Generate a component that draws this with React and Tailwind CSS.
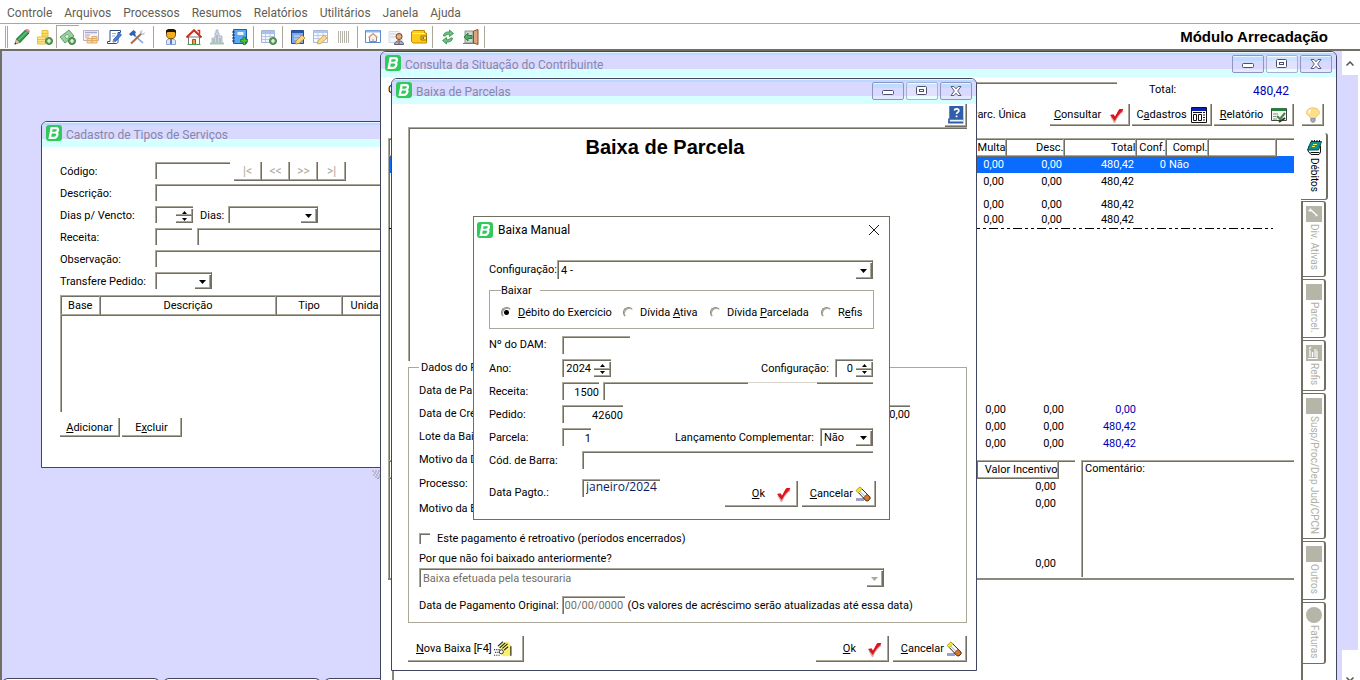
import { useState } from "react";

const SUNKEN = "border-t border-l border-[#aca899] shadow-[inset_1px_1px_0_#716f64] bg-white";
const RAISED = "border-r border-b border-[#716f64] shadow-[inset_-1px_-1px_0_#aca899] bg-white";

const MENUS = ["Controle", "Arquivos", "Processos", "Resumos", "Relatórios", "Utilitários", "Janela", "Ajuda"];

/* ---------- icons ---------- */

function Icon({ children, className = "w-4 h-4" }) {
  return (
    <svg viewBox="0 0 16 16" className={`${className} shrink-0`} fill="none" aria-hidden="true">
      {children}
    </svg>
  );
}

function Logo() {
  return (
    <svg viewBox="0 0 16 16" className="w-4 h-4 shrink-0" aria-hidden="true">
      <rect width="16" height="16" rx="3" fill="#2fc95c" />
      <path d="M5.6 3.2h4.400c2.600 0 2.600 3.400 .2 4.300 2.300 .9 1 5.300-2 5.300H3.800z" fill="none" stroke="#fff" strokeWidth="2.300" />
      <path d="M5 7.700h5" stroke="#fff" strokeWidth="1.800" />
    </svg>
  );
}

const Plus = () => (
  <>
    <circle cx="12" cy="12" r="3.500" fill="#5fa35a" stroke="#3f7f43" />
    <path d="M12 10v4M10 12h4" stroke="#fff" strokeWidth="1.200" />
  </>
);

const PencilIcon = () => (
  <Icon>
    <path d="M2.500 10L11.500 1l3.500 3-9 9.500z" fill="#2f9e4f" stroke="#1c6b35" />
    <path d="M4.500 11L13 2.800" stroke="#63c47a" strokeWidth="1.300" />
    <path d="M2.500 10l3.500 3.500L.8 15.200z" fill="#e9c99a" stroke="#555" strokeWidth=".6" />
    <path d="M.5 15.500l2-.8-1.200-1.200z" fill="#222" />
    <path d="M11.500 1L15 4l.8-1c.3-1.800-1.500-3.200-3.100-2.900z" fill="#e58b8b" />
  </Icon>
);
const CoinsIcon = () => (
  <Icon>
    <path d="M5 1.500h6V12H5z" fill="#ffe065" stroke="#e6bd4a" />
    <path d="M.5 8h8v7h-8z" fill="#ffe88a" stroke="#e6bd4a" />
    <path d="M1 10.500h7M1 12.800h7M5 4.500h6M5 7h6" stroke="#e6bd4a" />
    <Plus />
  </Icon>
);
const MoneyIcon = () => (
  <Icon>
    <path d="M0 8L9 1l5 6-9 7z" fill="#9ccf9f" stroke="#5d9e66" />
    <circle cx="7" cy="7.500" r="2" fill="#d9f0d9" stroke="#5d9e66" strokeWidth=".7" />
    <Plus />
  </Icon>
);
const StatementIcon = () => (
  <Icon>
    <path d="M.5 1.500h15v10H.5z" fill="#f3f4fb" stroke="#b3b3c4" />
    <path d="M2 3.500h12" stroke="#a6a9cc" strokeWidth="1.500" />
    <path d="M2 6h5M2 8h4" stroke="#c2a0a0" />
    <path d="M4 9.500h5V14H4zM9 7.500h5V14H9z" fill="#ffd9a0" stroke="#e2ab69" />
    <path d="M4 11.500h10M9 9.500h5" stroke="#e2ab69" />
  </Icon>
);
const ScrollPenIcon = () => (
  <Icon>
    <path d="M4 1.500h10.500v2H12v9c0 1.500-1 2-2 2H1.500v-2H4z" fill="#fff" stroke="#334a86" />
    <path d="M6 4.500h4M6 7h3" stroke="#9fb1df" />
    <path d="M7.500 10.500L13.500 4l2 2-6 6.500-2.500.6z" fill="#3d7fe0" stroke="#1f4da0" strokeWidth=".7" />
    <path d="M6.800 13.200l.6-2.500 1.900 1.800z" fill="#e07a50" />
  </Icon>
);
const ToolsIcon = () => (
  <Icon>
    <path d="M5 6l9 8" stroke="#7f9fd0" strokeWidth="1.500" />
    <path d="M0 5l4.500-4L7 3 6 5l1 1-1.500 1.500L4 6 2 7z" fill="#2f62b4" />
    <path d="M12.500 4.500L2 14.500" stroke="#b06a48" strokeWidth="2" />
    <path d="M10.500 3c1-1.500 3-2 3.500-2l-1.500 2L14 4.500l2-1.300c0 2-1.500 3-3.500 2.500z" fill="#b9c6dc" />
  </Icon>
);
const PersonIcon = () => (
  <Icon>
    <path d="M3.500 15.500v-3.500c0-3 9-3 9 0v3.500z" fill="#dce8fa" stroke="#8aa3cf" />
    <path d="M8 10v5" stroke="#2b5bb0" strokeWidth="1.500" />
    <path d="M3.500 1.500h9v5.500l-2 2.500h-5l-2-2.500z" fill="#f5ac1c" stroke="#6d4300" strokeWidth=".8" />
    <path d="M3 5V1.500L5 0h6l2 1.500V5l-1.500-2h-7z" fill="#20170c" />
  </Icon>
);
const HouseIcon = () => (
  <Icon>
    <path d="M2.500 8h11v7.500h-11z" fill="#fff" stroke="#777" />
    <path d="M.5 8.500L8 1.200l7.500 7.300" stroke="#c9301c" strokeWidth="2" />
    <path d="M11.500 1.500h2v4" stroke="#c9301c" strokeWidth="1.500" />
    <path d="M6.500 10.500h3v5h-3z" fill="#e79a4c" stroke="#9a5a20" />
    <path d="M1.500 15.500h13" stroke="#4f9a4d" />
  </Icon>
);
const MonumentIcon = () => (
  <Icon>
    <path d="M7 1h2v3h1v3h3v7H3v-5h3V4h1z" fill="#d3d9e2" stroke="#a3acbb" strokeWidth=".8" />
    <path d="M5 10v3M8 6v7M11 9v4" stroke="#8d9ab0" />
    <path d="M1 14.500h14" stroke="#a5c9ae" strokeWidth="2" />
  </Icon>
);
const BookPlusIcon = () => (
  <Icon>
    <path d="M1.500.5h13v14h-13z" fill="#5aaaf4" stroke="#1b5eab" />
    <path d="M5.500 3h6v3h-6z" fill="#e6f3ff" />
    <path d="M0 3h3M0 6h3M0 9h3M0 12h3" stroke="#1b3f73" />
    <path d="M11 8h2.500v2.500H16V13h-2.500v2.500H11V13H8.500v-2.500H11z" fill="#48c52e" stroke="#1f7a14" strokeWidth=".8" />
  </Icon>
);
const TablePlusIcon = () => (
  <Icon>
    <path d="M.5 1.500h13v12H.5z" fill="#f2f6ff" stroke="#a3b4d2" />
    <path d="M1 3.500h12.500" stroke="#a9c0ea" strokeWidth="3" />
    <path d="M1 7.500h12M1 10.500h12M4.500 5v8M9 5v8" stroke="#b9c8e0" />
    <Plus />
  </Icon>
);
const BlueEditIcon = () => (
  <Icon>
    <path d="M1.500 1.500h12v13h-12z" fill="#7ba8ea" stroke="#234b94" />
    <path d="M2 3h11" stroke="#2a57a8" strokeWidth="2" />
    <path d="M4 7h6M4 10h4" stroke="#d3e3fb" />
    <path d="M6 12l6-6 3 3-6 5.500-3.500.5z" fill="#f9d283" stroke="#b87f2c" strokeWidth=".8" />
  </Icon>
);
const TableEditIcon = () => (
  <Icon>
    <path d="M.5 1.500h14v12H.5z" fill="#f4f8ff" stroke="#a3b8dc" />
    <path d="M1 3h13" stroke="#b3caf0" strokeWidth="2" />
    <path d="M1 6.500h13M1 9.500h13M5 4v9M10 4v9" stroke="#bccbe4" />
    <path d="M5 12l6-6 3 3-6 5.500-3.500.5z" fill="#fbd88c" stroke="#cf9b46" strokeWidth=".8" />
  </Icon>
);
const BarcodeIcon = () => (
  <Icon>
    <path d="M2.500 2v12M4.500 2v12M6.500 2v12M8.500 2v12M10.500 2v12M12.500 2v12" stroke="#b5b5ac" />
  </Icon>
);
const WindowHomeIcon = () => (
  <Icon>
    <path d="M.5 1.500h15v12H.5z" fill="#fff" stroke="#5d8bcb" />
    <path d="M1 2.500h14" stroke="#8fbaf0" strokeWidth="2" />
    <path d="M4.500 8v4.500h7V8" fill="#f0f0f0" stroke="#888" />
    <path d="M3.500 8.500L8 4.800l4.500 3.700" stroke="#dd9d76" strokeWidth="1.500" />
    <path d="M7.500 10h1v3h-1z" fill="#999" />
  </Icon>
);
const UserDocIcon = () => (
  <Icon>
    <path d="M1 2.500h10l3 3v8H1z" fill="#f3f5fa" stroke="#d3d9e4" />
    <path d="M2 5h6M2 8h5" stroke="#c9cfdd" />
    <circle cx="11" cy="7.500" r="3" fill="#e9ad78" stroke="#75441e" />
    <path d="M6.500 15.500c0-5 9-5 9 0z" fill="#a8aebb" stroke="#5c6475" />
    <path d="M11 12v3.500" stroke="#d13b2a" />
  </Icon>
);
const WalletIcon = () => (
  <Icon>
    <path d="M.5 3l2-1.500h11V4h2v10H2L.5 12.500z" fill="#ffcc1a" stroke="#b98a00" />
    <path d="M2 4.500h12" stroke="#fff0a0" />
    <path d="M10 7h5.500v4H10z" fill="#ffe069" stroke="#8f6b00" />
    <circle cx="12.200" cy="9" r=".9" fill="#7a5c00" />
  </Icon>
);
const RefreshIcon = () => (
  <Icon>
    <path d="M3.500 7c0-3 3-4.500 6-4V1l4 3.500-4 3V5.500C7.500 5 6 5.500 5.500 7z" fill="#6cc07a" stroke="#2f8b46" strokeWidth=".8" />
    <path d="M12.500 9c0 3-3 4.500-6 4v2l-4-3.500 4-3v2c2 .5 3.500 0 4-1.500z" fill="#6cc07a" stroke="#2f8b46" strokeWidth=".8" />
  </Icon>
);
const ExitIcon = () => (
  <Icon>
    <path d="M2 2h8v12H2z" fill="#cfd6cc" stroke="#8b9487" />
    <path d="M10.500 2L15 .5v15l-4.500-1.500z" fill="#dca680" stroke="#8a5128" />
    <path d="M1 8l4-4v2.500h4v3H5V12z" fill="#4fb062" stroke="#20703a" strokeWidth=".8" />
    <path d="M0 14.500h11" stroke="#777" />
  </Icon>
);
const CheckIcon = () => (
  <Icon>
    <path d="M2.500 9.500l3 5.500c2-5 4-8 8.500-11" stroke="#d9a9a9" strokeWidth="2" />
    <path d="M1 8l3.500-.8L6 9.500C8 6 9.500 3 10.500 2h3.800L13.500 4C10.500 6.500 8 9.500 5.800 14z" fill="#e0131a" />
  </Icon>
);
const EraserIcon = () => (
  <Icon>
    <path d="M1 13.500h8" stroke="#9da0c8" strokeWidth="3" />
    <path d="M1.500 4.500L5 1 14.800 11c.8 2.500-1.500 4.500-4 3.500z" fill="#fff" stroke="#222" />
    <path d="M.8 4.500L5 .8l2 2L3.300 6.800z" fill="#f4e42a" stroke="#b0a600" strokeWidth=".6" />
    <path d="M8.500 11.800l3.500-3.500 2.800 2.700c.8 2.500-1.500 4.500-4 3.500z" fill="#d9762a" stroke="#5a2a00" strokeWidth=".8" />
    <path d="M4.500 5l5.500 5.500" stroke="#888" strokeWidth=".8" />
  </Icon>
);
const HandIcon = () => (
  <Icon className="w-[18px] h-[18px]">
    <path d="M4 6l3-4 2 .5L11 1l2 1 1 1.500 1.500 2v9H8l-3-2.500 1.500-3.500z" fill="#f7ee72" />
    <path d="M3.500 5.500L8 1.500M5 7l5-4.500M7.500 7.500l4.500-4M9 9l3.500-3M15 5.500v8.500" stroke="#222" />
    <path d="M0 8.500h5M1 11h4M0 13.500h6" stroke="#333" strokeDasharray="1 1" />
    <circle cx="6.500" cy="10.500" r="1.800" fill="#fff" stroke="#222" strokeWidth=".8" />
  </Icon>
);
const FormsIcon = () => (
  <Icon>
    <path d="M.5 .5h15v15H.5z" fill="#fff" stroke="#111" />
    <path d="M1 2.500h14" stroke="#0a1fb4" strokeWidth="3" />
    <path d="M2.500 7.500h3v6h-3zM7.500 7.500h3v6h-3z" stroke="#111" />
    <path d="M2 5.500h9M12 5.500h2M12 8h2M12 10.500h2M12 13h2" stroke="#111" />
  </Icon>
);
const ReportIcon = () => (
  <Icon>
    <path d="M.5 1.500h15v12H.5z" fill="#f4f8f0" stroke="#444" />
    <path d="M1 2.500h14" stroke="#2b7d42" strokeWidth="3" />
    <path d="M2 7h5M2 9.500h3M2 12h4" stroke="#888" />
    <path d="M6 9l3 3 5-6" stroke="#3f8a3a" strokeWidth="2" />
    <path d="M8 15l6-4" stroke="#333" strokeWidth="2" />
  </Icon>
);
const BulbIcon = () => (
  <Icon>
    <path d="M8 .8c-4.500 0-7 3-6.300 5.800C2.200 8.500 5.500 9.300 5.500 11h5c0-1.700 3.300-2.500 3.800-4.400C15 3.800 12.500 .8 8 .8z" fill="#ffdf8a" stroke="#eeb75a" strokeWidth=".8" />
    <path d="M5.500 3c-1 .6-1.500 2-1 3.200" stroke="#fff" strokeWidth="1.500" />
    <path d="M5.800 11.500h4.400v2.300l-1 1.400H6.800l-1-1.400z" fill="#a8adb8" stroke="#6b707c" strokeWidth=".6" />
  </Icon>
);
const HelpBookIcon = () => (
  <Icon className="w-[18px] h-[18px]">
    <path d="M2 0h12.500v12H2z" fill="#2e5fa8" />
    <path d="M1 11h13.500v4.500H1z" fill="#2e5fa8" />
    <path d="M2.500 13h12" stroke="#eef3fb" strokeWidth="1.500" />
    <path d="M6.500 4c.3-2 4-2 4 .2 0 1.500-2 1.300-2 3M8.500 8.500V10" stroke="#fff" strokeWidth="1.500" />
  </Icon>
);
const NotebookIcon = () => (
  <Icon>
    <path d="M3 7h11.500v6.500L13 15.500H5L2 12z" fill="#fff" stroke="#111" />
    <path d="M5 2.500h10.500l-3 8.500H1.500z" fill="#12908e" stroke="#064f4e" />
    <path d="M6 1v2M8.500 1v2M11 1v2M13.500 1v2" stroke="#111" />
    <path d="M7 5.500h4M6 7.500h3" stroke="#eaf06a" />
    <path d="M4.500 13.500h9" stroke="#111" />
  </Icon>
);
const GrayIcon = ({ kind }) => (
  <Icon>
    {kind === "circle" ? <circle cx="8" cy="8" r="8" fill="#b5b5a8" /> : <rect width="16" height="16" fill="#b5b5a8" />}
    {kind === "tool" && <path d="M2.500 4.500h3l5 4.500M4.500 2.500v3M9.500 9.500h2" stroke="#fff" strokeWidth="1.500" />}
    {kind === "doc" && <path d="M2 13.500h9V6M4 12V5M6.500 12V7M9 12V6M3 4l2-2M8 5h3" stroke="#fff" strokeWidth="1.200" />}
  </Icon>
);

const TOOLBAR = [
  [PencilIcon, CoinsIcon, MoneyIcon, StatementIcon, ScrollPenIcon, ToolsIcon],
  [PersonIcon, HouseIcon, MonumentIcon, BookPlusIcon],
  [TablePlusIcon],
  [BlueEditIcon, TableEditIcon, BarcodeIcon],
  [WindowHomeIcon, UserDocIcon, WalletIcon],
  [RefreshIcon, ExitIcon],
];

/* ---------- controls ---------- */

function Caret({ disabled }) {
  return (
    <svg viewBox="0 0 7 4" className="w-[7px] h-1" aria-hidden="true">
      <path d="M0 0h7L3.500 4z" fill={disabled ? "#aca899" : "#000"} />
    </svg>
  );
}

function Select({ id, value, className = "", disabled, options, label }) {
  return (
    <span className={`relative flex ${className} ${SUNKEN} ${disabled ? "text-[#716f64]" : ""} border-r border-r-[#716f64]`}>
      <select
        id={id}
        aria-label={label}
        defaultValue={value}
        disabled={disabled}
        className="appearance-none w-full pl-[3px] pr-4 bg-transparent outline-none opacity-100"
      >
        {(options || [value]).map((o) => (
          <option key={o}>{o}</option>
        ))}
      </select>
      <span className={`absolute right-0 top-[2px] bottom-0 w-4 flex items-center justify-center pointer-events-none ${RAISED}`}>
        <Caret disabled={disabled} />
      </span>
    </span>
  );
}

function Spin({ id, value, className = "" }) {
  const [n, setN] = useState(value);
  return (
    <span className={`flex ${className} ${SUNKEN}`}>
      <input
        id={id}
        value={n}
        onChange={(e) => setN(e.target.value)}
        className="flex-1 min-w-0 pr-[3px] bg-transparent outline-none text-right"
      />
      <span className="flex flex-col w-[17px] pt-[2px] shrink-0">
        <button aria-label="+" onClick={() => setN(Number(n) + 1)} className={`flex-1 flex items-center justify-center ${RAISED}`}>
          <svg viewBox="0 0 5 3" className="w-[5px] h-[3px]"><path d="M0 3h5L2.500 0z" fill="#000" /></svg>
        </button>
        <button aria-label="-" onClick={() => setN(Number(n) - 1)} className={`flex-1 flex items-center justify-center ${RAISED}`}>
          <svg viewBox="0 0 5 3" className="w-[5px] h-[3px]"><path d="M0 0h5L2.500 3z" fill="#000" /></svg>
        </button>
      </span>
    </span>
  );
}

function Input({ className = "", ...props }) {
  return <input className={`${SUNKEN} outline-none min-w-0 ${className}`} {...props} />;
}

function Button({ className = "", children, ...props }) {
  return (
    <button className={`flex items-center ${RAISED} ${className}`} {...props}>
      {children}
    </button>
  );
}

function WindowButtons() {
  const base =
    "w-8 h-[18px] flex items-center justify-center border border-[#8f94c0] rounded-[2px] bg-[linear-gradient(#e8f4ff_0_1px,#bfdcff_1px_5px,#d9d9ff_5px_13px,#e4e8ff_13px)]";
  const light =
    "w-8 h-[18px] flex items-center justify-center border border-[#a5b2d0] rounded-[2px] bg-[linear-gradient(#f4faff_0_1px,#cfe2ff_1px_5px,#e2e2ff_5px_13px,#eaffff_13px)]";
  return (
    <span className="ml-auto flex gap-[2px]">
      <button aria-label="Minimizar" className={base}>
        <svg viewBox="0 0 12 10" className="w-3 h-2.5" fill="#fff" stroke="#4b4e6d"><rect x=".5" y="4.500" width="11" height="4" rx="1" /></svg>
      </button>
      <button aria-label="Restaurar" className={light}>
        <svg viewBox="0 0 12 10" className="w-3 h-2.5" fill="#fff" stroke="#4b4e6d"><rect x=".5" y=".5" width="10" height="8" rx="1" /><rect x="3.500" y="3.500" width="4" height="2" /></svg>
      </button>
      <button aria-label="Fechar" className={base}>
        <svg viewBox="0 0 12 10" className="w-3 h-2.5" fill="#fff" stroke="#4b4e6d" strokeWidth=".9"><path d="M1 .5h3l2 2.300L8 .5h3L7.700 5 11 9.500H8L6 7.200 4 9.500H1L4.300 5z" /></svg>
      </button>
    </span>
  );
}

function Window({ title, className = "", buttons, children }) {
  return (
    <section className={`absolute flex flex-col bg-white border border-[#42455f] rounded-t-md overflow-hidden ${className}`}>
      <header className="h-[25px] shrink-0 flex items-start pt-[3px] pl-1 pr-1 bg-[linear-gradient(#e8f4ff_0_1px,#b9d7ff_1px_3px,#d9d9ff_3px_17px,#d6ffff_17px)]">
        <Logo />
        <h2 className="pl-1 text-xs leading-[20px] text-[#8487ab]">{title}</h2>
        {buttons && <WindowButtons />}
      </header>
      {children}
    </section>
  );
}

/* ---------- windows ---------- */

function CadastroWindow() {
  const row = "flex h-[17px] items-stretch";
  const lab = "w-[95px] shrink-0 leading-[19px]";
  const nav = "w-[28px] h-[19px] justify-center text-[#aca899] text-xs leading-none";
  const th = "h-[19px] font-normal border-r border-b border-[#716f64] shadow-[inset_-1px_-1px_0_#aca899]";
  return (
    <Window title="Cadastro de Tipos de Serviços" className="left-[39px] top-[70px] w-[460px] h-[347px]">
      <div className="pt-[15px] pl-[18px] flex flex-col gap-[5px]">
        <div className={row}>
          <label htmlFor="codigo" className={lab}>Código:</label>
          <Input id="codigo" className="w-[75px] mr-1" />
          <Button className={nav}>|&lt;</Button>
          <Button className={nav}>&lt;&lt;</Button>
          <Button className={nav}>&gt;&gt;</Button>
          <Button className={nav}>&gt;|</Button>
        </div>
        <div className={row}>
          <label htmlFor="descricao" className={lab}>Descrição:</label>
          <Input id="descricao" className="flex-1" />
        </div>
        <div className={row}>
          <label htmlFor="vencto" className={lab}>Dias p/ Vencto:</label>
          <Spin id="vencto" value="" className="w-[38px]" />
          <label htmlFor="dias" className="w-[35px] pl-[7px] leading-[19px]">Dias:</label>
          <Select id="dias" value="" className="w-[90px]" />
        </div>
        <div className={row}>
          <label htmlFor="receita" className={lab}>Receita:</label>
          <Input id="receita" className="w-[37px] mr-[5px]" />
          <Input aria-label="Receita" className="flex-1" />
        </div>
        <div className={row}>
          <label htmlFor="obs" className={lab}>Observação:</label>
          <Input id="obs" className="flex-1" />
        </div>
        <div className={row}>
          <label htmlFor="transf" className={lab}>Transfere Pedido:</label>
          <Select id="transf" value="" className="w-[57px]" />
        </div>
      </div>
      <div className={`mt-[6px] ml-[18px] h-[117px] shrink-0 ${SUNKEN}`}>
        <table className="w-full table-fixed">
          <thead>
            <tr>
              <th className={`${th} w-[39px]`}>Base</th>
              <th className={`${th} w-[176px]`}>Descrição</th>
              <th className={`${th} w-[66px]`}>Tipo</th>
              <th className={`${th} text-left pl-2`}>Unida</th>
            </tr>
          </thead>
        </table>
      </div>
      <div className="flex gap-[2px] mt-[6px] pl-[18px]">
        <Button className="w-[60px] h-[19px] justify-center"><span><u>A</u>dicionar</span></Button>
        <Button className="w-[60px] h-[19px] justify-center"><span>E<u>x</u>cluir</span></Button>
      </div>
    </Window>
  );
}

const DEBITOS = [
  { multa: "0,00", desc: "0,00", total: "480,42", conf: "0", compl: "Não", selected: true },
  { multa: "0,00", desc: "0,00", total: "480,42" },
  { multa: "0,00", desc: "0,00", total: "480,42", gap: true },
  { multa: "0,00", desc: "0,00", total: "480,42" },
];

const TOTAIS = ["0,00", "480,42", "480,42"];

const TABS = [
  { name: "Div. Ativas", icon: "tool", size: "h-[76px]" },
  { name: "Parcel.", icon: "box", size: "h-[59px]" },
  { name: "Refis", icon: "doc", size: "h-[51px]" },
  { name: "Susp/Proc/Dep Jud/CPCN", icon: "box", size: "h-[146px]" },
  { name: "Outros", icon: "box", size: "h-[59px]" },
  { name: "Faturas", icon: "circle", size: "h-[62px]" },
];

function ConsultaWindow() {
  const th = "h-[17px] p-0 font-normal text-right border-r border-b border-[#716f64] shadow-[inset_-1px_-1px_0_#aca899]";
  const td = "p-0 pr-[2px] text-right";
  return (
    <Window title="Consulta da Situação do Contribuinte" buttons className="left-[378px] right-[5px] top-0 -bottom-4">
      <div className="flex-1 flex gap-[7px] pl-[7px] pr-2">
        <div className="flex-1 min-w-0 flex flex-col">
          <div className="flex h-[17px] mt-[5px]">
            <label htmlFor="contrib" className="w-6 leading-[15px]">C</label>
            <Input id="contrib" className="flex-1" />
            <span className="w-[134px] pl-8 leading-[16px]">Total:</span>
            <output className="w-[43px] pr-[5px] flex justify-end text-xs leading-[18px] text-[#0000b4]">480,42</output>
          </div>
          <div className="flex justify-end h-[22px] mt-[5px] gap-[2px]">
            <span className="pr-[22px] leading-[22px]">Parc. Única</span>
            <Button className="w-[80px] justify-center gap-2"><span><u>C</u>onsultar</span><CheckIcon /></Button>
            <Button className="w-[80px] justify-center gap-1"><span>C<u>a</u>dastros</span><FormsIcon /></Button>
            <Button className="w-[80px] justify-center gap-2"><span><u>R</u>elatório</span><ReportIcon /></Button>
          </div>
          <div className={`mt-3 h-[322px] shrink-0 flex flex-col justify-between ${SUNKEN}`}>
            <div>
              <table className="w-full table-fixed">
                <thead>
                  <tr>
                    <th className={th}>Multa</th>
                    <th className={`${th} w-[58px]`}>Desc.</th>
                    <th className={`${th} w-[72px]`}>Total</th>
                    <th className={`${th} w-[30px]`}>Conf.</th>
                    <th className={`${th} w-[42px]`}>Compl.</th>
                    <th className={`${th} w-[68px]`}></th>
                    <th className="w-[18px] p-0"></th>
                  </tr>
                </thead>
                <tbody>
                  {DEBITOS.map((d, i) => (
                    <tr key={i} className={d.selected ? "bg-[#0a6cff] text-white h-[17px]" : d.gap ? "h-[21px] align-bottom" : "h-[17px]"}>
                      <td className={td}>{d.multa}</td>
                      <td className={td}>{d.desc}</td>
                      <td className={td}>{d.total}</td>
                      <td className="p-0 text-right">{d.conf}</td>
                      <td className="p-0 pl-[3px]">{d.compl}</td>
                      <td></td>
                      <td></td>
                    </tr>
                  ))}
                </tbody>
              </table>
              <div className="h-px mr-[21px] bg-[repeating-linear-gradient(90deg,#000_0_9px,#fff_9px_12px,#000_12px_15px,#fff_15px_18px,#000_18px_21px,#fff_21px_24px)]" />
            </div>
            <div className="pr-[158px] pb-2">
              {TOTAIS.map((t, i) => (
                <div key={i} className="flex justify-end h-[17px] items-center text-right">
                  <span>0,00</span>
                  <span className="w-[58px]">0,00</span>
                  <span className="w-[72px] text-[#0000b4]">{t}</span>
                </div>
              ))}
            </div>
          </div>
          <div className="flex h-[120px] shrink-0 gap-[6px] border-b-2 border-[#8a887b]">
            <div className={`flex-1 ${SUNKEN}`}>
              <table className="w-full table-fixed">
                <thead>
                  <tr>
                    <th className={th}></th>
                    <th className={`${th} w-[81px]`}>Valor Incentivo</th>
                    <th className="w-[17px] p-0"></th>
                  </tr>
                </thead>
                <tbody>
                  <tr className="h-[17px]"><td></td><td className={td}>0,00</td><td></td></tr>
                  <tr className="h-[17px]"><td></td><td className={td}>0,00</td><td></td></tr>
                  <tr className="h-[58px] align-bottom"><td></td><td className={td}>0,00</td><td></td></tr>
                </tbody>
              </table>
            </div>
            <div className={`w-[213px] h-[117px] flex flex-col pl-[3px] ${SUNKEN}`}>
              <label htmlFor="coment" className="leading-4">Comentário:</label>
              <textarea id="coment" className="flex-1 resize-none outline-none bg-transparent" />
            </div>
          </div>
          <div className="flex-1 ml-1 mt-1 border-l-2 border-[#8a887b]" />
        </div>

        <div className="w-[27px] flex flex-col pt-[27px]">
          <Button aria-label="Dica" className="w-[22px] h-[22px] ml-px justify-center"><BulbIcon /></Button>
          <button className="mt-[7px] h-[67px] pt-1.5 flex flex-col items-center gap-[3px] border-r-2 border-b border-[#716f64] rounded-r-[3px]">
            <NotebookIcon />
            <span className="[writing-mode:vertical-rl] text-[10px] leading-3">Débitos</span>
          </button>
          <div className="flex-1 mt-px flex flex-col gap-[2px] border-l-2 border-[#716f64] pr-[2px]">
            {TABS.map((t) => (
              <button
                key={t.name}
                disabled
                className={`${t.size} shrink-0 pt-1 flex flex-col items-center gap-[2px] border-t border-r-2 border-b border-[#716f64] rounded-r-[3px] text-[#b0b0a4]`}
              >
                <GrayIcon kind={t.icon} />
                <span className="[writing-mode:vertical-rl] text-[10px] leading-3 whitespace-nowrap">{t.name}</span>
              </button>
            ))}
          </div>
        </div>
      </div>
    </Window>
  );
}

function OkCancel() {
  return (
    <>
      <Button className="ml-auto w-[73px] h-[26px] justify-end pr-[5px] gap-[11px]"><span><u>O</u>k</span><CheckIcon /></Button>
      <Button className="w-[74px] h-[26px] ml-1 justify-end pr-[4px] gap-[2px]"><span><u>C</u>ancelar</span><EraserIcon /></Button>
    </>
  );
}

function BaixaWindow() {
  const r23 = "h-[23px] flex items-center";
  const r25 = "h-[25px] flex items-center";
  return (
    <Window title="Baixa de Parcelas" buttons className="left-[389px] top-[27px] w-[586px]">
      <div className="flex flex-col pl-4 pr-[9px] pb-2">
        <Button aria-label="Ajuda" className="self-end w-[22px] h-[23px] justify-center"><HelpBookIcon /></Button>
        <div className={`h-[234px] pt-[7px] ${SUNKEN}`}>
          <h1 className="pr-[46px] text-center font-[Liberation_Sans,sans-serif] text-xl leading-6 font-bold">Baixa de Parcela</h1>
        </div>
        <fieldset className="border border-[#aca899] px-[10px] pb-2">
          <legend className="px-[2px] leading-[13px]">Dados do P</legend>
          <div className="pt-[5px]">
            <div className={r23}>Data de Pa</div>
            <div className={`${r23} justify-between`}>
              <label htmlFor="valor">Data de Cré</label>
              <Input id="valor" defaultValue="0,00" className="w-[100px] h-[18px] mr-[46px] text-right" />
            </div>
            <div className={r23}>Lote da Bai</div>
            <div className={r23}>Motivo da D</div>
            <div className={r25}>Processo:</div>
            <div className={r25}>Motivo da B</div>
          </div>
          <label className="mt-1 h-[26px] flex items-center gap-[7px]">
            <input type="checkbox" className={`appearance-none w-[11px] h-[11px] checked:bg-black ${SUNKEN}`} />
            Este pagamento é retroativo (períodos encerrados)
          </label>
          <label htmlFor="motivo" className="block h-[17px] leading-[15px]">Por que não foi baixado anteriormente?</label>
          <Select id="motivo" disabled value="Baixa efetuada pela tesouraria" className="w-[465px] h-[19px]" />
          <div className="mt-[9px] h-[18px] flex items-center">
            <label htmlFor="original">Data de Pagamento Original:</label>
            <Input id="original" defaultValue="00/00/0000" className="w-[63px] h-[18px] pl-[2px] ml-[3px] mr-[3px] text-[#716f64]" />
            <span>(Os valores de acréscimo serão atualizadas até essa data)</span>
          </div>
        </fieldset>
        <div className="flex h-[26px] mt-[13px]">
          <Button className="w-[116px] pl-2 gap-[2px]"><span><u>N</u>ova Baixa [F4]</span><HandIcon /></Button>
          <OkCancel />
        </div>
      </div>
    </Window>
  );
}

function Radio({ children, checked, className = "" }) {
  return (
    <label className={`flex items-center gap-[6px] ${className}`}>
      <input
        type="radio"
        name="baixar"
        defaultChecked={checked}
        className="appearance-none w-[11px] h-[11px] rounded-full border border-[#8a887b] border-r-transparent border-b-transparent shadow-[inset_1px_1px_0_#aca899] checked:bg-[radial-gradient(circle,#000_2px,transparent_3px)]"
      />
      <span>{children}</span>
    </label>
  );
}

function BaixaManualDialog() {
  const row = "flex h-[18px]";
  const lab = "w-[73px] shrink-0 leading-[20px]";
  return (
    <section role="dialog" className="absolute left-[471px] top-[165px] w-[417px] bg-white border border-[#716f64]">
      <header className="h-[25px] flex items-center pl-[3px] pr-[9px]">
        <Logo />
        <h2 className="pl-[5px] text-xs">Baixa Manual</h2>
        <button aria-label="Fechar" className="ml-auto">
          <svg viewBox="0 0 12 12" className="w-3 h-3" stroke="#1a1a1a"><path d="M1 1l10 10M11 1L1 11" /></svg>
        </button>
      </header>
      <div className="pt-[18px] pl-[15px] pr-[13px] pb-3">
        <div className="flex h-[19px] pr-[3px]">
          <label htmlFor="config" className="w-[68px] leading-[20px]">Configuração:</label>
          <Select id="config" value="4 -" className="flex-1" />
        </div>
        <fieldset className="mt-[5px] mr-[2px] border border-[#aca899] px-[11px]">
          <legend className="pr-2 leading-[13px]">Baixar</legend>
          <div className="flex h-[31px] items-center">
            <Radio checked className="w-[122px]"><u>D</u>ébito do Exercício</Radio>
            <Radio className="w-[87px]">Dívida <u>A</u>tiva</Radio>
            <Radio className="w-[111px]">Dívida <u>P</u>arcelada</Radio>
            <Radio>R<u>e</u>fis</Radio>
          </div>
        </fieldset>
        <div className="mt-[7px] flex flex-col gap-[5px] pr-[3px]">
          <div className={row}>
            <label htmlFor="dam" className="w-[73px] leading-[18px]">Nº do DAM:</label>
            <Input id="dam" className="w-[68px]" />
          </div>
          <div className={row}>
            <label htmlFor="ano" className={lab}>Ano:</label>
            <Spin id="ano" value={2024} className="w-[49px]" />
            <label htmlFor="conf2" className="ml-auto pr-[6px] leading-[20px]">Configuração:</label>
            <Spin id="conf2" value={0} className="w-[38px]" />
          </div>
          <div className={row}>
            <label htmlFor="rec" className={lab}>Receita:</label>
            <Input id="rec" defaultValue="1500" className="w-[37px] mr-1 pt-px text-right" />
            <span className="relative flex flex-1">
              <Input aria-label="Receita" className="flex-1" />
              <span className="absolute top-0 left-[145px] w-[69px] h-[2px] bg-white border-t border-[#d8d6cc]" />
            </span>
          </div>
          <div className={row}>
            <label htmlFor="ped" className={lab}>Pedido:</label>
            <Input id="ped" defaultValue="42600" className="w-[61px] pt-px text-right" />
          </div>
          <div className={row}>
            <label htmlFor="parc" className={lab}>Parcela:</label>
            <Input id="parc" defaultValue="1" className="w-[29px] pt-px text-right" />
            <label htmlFor="lanc" className="ml-auto pr-[6px] leading-[20px]">Lançamento Complementar:</label>
            <Select id="lanc" value="Não" options={["Não", "Sim"]} className="w-[53px]" />
          </div>
          <div className={row}>
            <label htmlFor="barra" className="w-[93px] leading-[20px]">Cód. de Barra:</label>
            <Input id="barra" className="flex-1" />
          </div>
        </div>
        <div className="flex items-end h-[28px] mt-[10px]">
          <label htmlFor="pagto" className="w-[93px] leading-[28px]">Data Pagto.:</label>
          <Input id="pagto" defaultValue="janeiro/2024" className="self-start w-[78px] h-[18px] pl-[3px] pb-1 font-[Open_Sans,sans-serif] text-xs text-[#0b1a5a]" />
          <OkCancel />
        </div>
      </div>
    </section>
  );
}

export default function App() {
  return (
    <div className="h-screen flex flex-col overflow-hidden bg-white text-black font-[Roboto,Arial,sans-serif] text-[11px] leading-[13px]">
      <nav className="h-6 shrink-0 flex items-center pt-[2px] pl-px border-b border-[#aca899] text-xs text-[#5f5e55]">
        {MENUS.map((m) => (
          <button key={m} className="px-[6px]">{m}</button>
        ))}
      </nav>

      <div className="h-[27px] shrink-0 flex items-center border-b-2 border-[#716f64] pl-[5px]">
        <span className="w-[3px] h-[22px] mr-[2px] border-x border-[#aca899]" />
        {TOOLBAR.map((group, g) => (
          <div key={g} className="flex items-center">
            {group.map((Glyph, i) => (
              <button
                key={i}
                className={`w-[23px] h-[23px] flex items-center justify-center ${g === 0 && i === 2 ? "border-t border-l border-[#aca899]" : ""}`}
              >
                <Glyph />
              </button>
            ))}
            <span className={`h-[22px] border-l border-[#aca899] ${g === 0 ? "ml-[5px] mr-[5px]" : "ml-[2px] mr-[3px]"}`} />
          </div>
        ))}
        <span className="ml-auto pr-8 font-[Liberation_Sans,sans-serif] text-[15px] font-bold">Módulo Arrecadação</span>
      </div>

      <div className="flex-1 flex min-h-0">
        <main className="relative flex-1 overflow-hidden bg-[#d9d9ff] border-l-2 border-[#716f64]">
          <div className="absolute left-0 right-0 -bottom-1 flex gap-[3px]">
            <span className="w-[158px] h-[6px] bg-white border border-[#42455f] rounded-t-md" />
            <span className="w-[158px] h-[6px] bg-white border border-[#42455f] rounded-t-md" />
            <span className="w-[158px] h-[6px] bg-white border border-[#42455f] rounded-t-md" />
          </div>
          <svg viewBox="0 0 9 10" className="absolute left-[370px] top-[418px] w-[9px] h-[10px]" stroke="#9a9aa6">
            <path d="M0 2h9M2 4h7M1 6h8M3 8h6M5 9.500h4" strokeDasharray="2 1" />
          </svg>
          <CadastroWindow />
          <ConsultaWindow />
          <BaixaWindow />
          <BaixaManualDialog />
        </main>
        <div className="w-[18px] flex flex-col items-center border-r-2 border-white">
          <button aria-label="Rolar para cima" className="h-6 flex items-center">
            <svg viewBox="0 0 8 5" className="w-2 h-[5px]" fill="none" stroke="#55554d" strokeWidth="1.500"><path d="M.5 4.500L4 1l3.500 3.500" /></svg>
          </button>
          <div className="flex-1 w-full bg-[#d9d9ff]" />
          <button aria-label="Rolar para baixo" className="h-[30px] flex items-end">
            <svg viewBox="0 0 8 5" className="w-2 h-[5px]" fill="none" stroke="#55554d" strokeWidth="1.500"><path d="M.5 2.500L4 6l3.500-3.500" /></svg>
          </button>
        </div>
      </div>
    </div>
  );
}
